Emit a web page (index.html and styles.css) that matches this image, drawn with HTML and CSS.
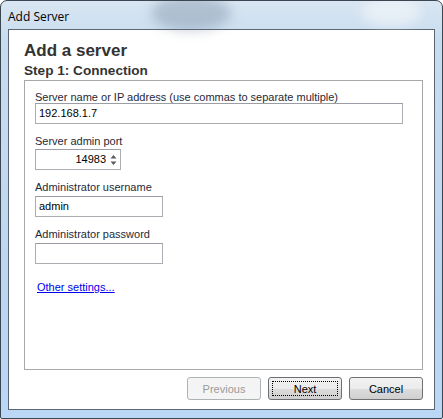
FILE: index.html
```html
<!DOCTYPE html>
<html>
<head>
<meta charset="utf-8">
<link rel="stylesheet" href="styles.css">
</head>
<body>
<div class="window">
  <div class="titlebar">
    <span class="blob blob-a"></span>
    <span class="blob blob-b"></span>
    <span class="title">Add Server</span>
  </div>
  <div class="client">
    <h1 class="heading">Add a server</h1>
    <h2 class="subheading">Step 1: Connection</h2>
    <div class="panel">
      <div class="field">
        <label class="label label-tight">Server name or IP address (use commas to separate multiple)</label>
        <div class="input input-wide">192.168.1.7</div>
      </div>
      <div class="field">
        <label class="label">Server admin port</label>
        <div class="input input-spin">
          <span class="spin-value">14983</span>
          <span class="spin-arrows">
            <svg width="7" height="14" viewBox="0 0 7 14"><path d="M3.5 2 L6.5 5.5 L0.5 5.5 Z" fill="#5a5a5a"/><path d="M0.5 8.5 L6.5 8.5 L3.5 12 Z" fill="#5a5a5a"/></svg>
          </span>
        </div>
      </div>
      <div class="field">
        <label class="label label-loose">Administrator username</label>
        <div class="input input-mid">admin</div>
      </div>
      <div class="field">
        <label class="label label-loose">Administrator password</label>
        <div class="input input-mid"></div>
      </div>
      <a class="link" href="#">Other settings...</a>
    </div>
    <div class="buttons">
      <button class="btn btn-disabled">Previous</button>
      <button class="btn btn-default"><span class="focus">Next</span></button>
      <button class="btn">Cancel</button>
    </div>
  </div>
</div>
</body>
</html>
```
FILE: styles.css
```css
html, body {
  margin: 0;
  padding: 0;
  background: #ffffff;
}
.window {
  box-sizing: border-box;
  width: 443px;
  height: 419px;
  border: 1px solid #3a4652;
  border-radius: 7px 7px 2px 2px;
  background: linear-gradient(to bottom, #d9e6f2 0px, #c8dcef 40px, #bcd6f1 300px, #bad7f6 100%);
  display: flex;
  flex-direction: column;
  overflow: hidden;
  position: relative;
}
.titlebar {
  height: 28px;
  position: relative;
  display: flex;
  align-items: center;
  padding-left: 7px;
}
.blob {
  position: absolute;
  border-radius: 50%;
  filter: blur(6px);
}
.blob-a {
  left: 150px;
  top: -6px;
  width: 80px;
  height: 36px;
  background: rgba(90, 110, 135, 0.3);
}
.blob-b {
  left: 360px;
  top: -4px;
  width: 60px;
  height: 30px;
  background: rgba(255, 255, 255, 0.45);
}
.title {
  position: relative;
  font-family: "Open Sans", "Liberation Sans", sans-serif;
  font-size: 12px;
  color: #000000;
  margin-top: 2px;
}
.client {
  box-sizing: border-box;
  margin: 0 7px;
  height: 381px;
  border: 1px solid #5c6672;
  background: #ffffff;
  padding: 0 11px 0 15px;
  display: flex;
  flex-direction: column;
}
.heading {
  margin: 11px 0 0 0;
  font-family: "Liberation Sans", Arial, sans-serif;
  font-weight: bold;
  font-size: 17px;
  line-height: 20px;
  color: #333333;
}
.subheading {
  margin: 1px 0 0 0;
  font-family: "Liberation Sans", Arial, sans-serif;
  font-weight: bold;
  font-size: 13.6px;
  line-height: 17px;
  color: #333333;
}
.panel {
  box-sizing: border-box;
  margin-top: 1px;
  height: 290px;
  border: 1px solid #a8a8a8;
  padding: 10px 10px 0 10px;
  display: flex;
  flex-direction: column;
}
.field {
  display: flex;
  flex-direction: column;
  margin-bottom: 11px;
}
.label {
  font-family: "Liberation Sans", Arial, sans-serif;
  font-size: 11px;
  line-height: 13px;
  color: #1f2a37;
  margin-bottom: 1px;
}
.label-tight {
  margin-bottom: -1px;
}
.label-loose {
  margin-bottom: 2px;
}
.input {
  box-sizing: border-box;
  height: 21px;
  border: 1px solid #abadb3;
  border-top-color: #9a9da4;
  font-family: "Liberation Sans", Arial, sans-serif;
  font-size: 11px;
  line-height: 19px;
  padding: 0 3px;
  color: #000000;
  background: #ffffff;
}
.input-wide {
  width: 368px;
}
.input-mid {
  width: 128px;
}
.input-spin {
  width: 86px;
  display: flex;
  justify-content: flex-end;
  align-items: center;
  padding: 0 3px 0 3px;
}
.spin-value {
  margin-right: 4px;
}
.spin-arrows {
  display: flex;
  align-items: center;
}
.link {
  margin-top: 6px;
  margin-left: 2px;
  font-family: "Liberation Sans", Arial, sans-serif;
  font-size: 11px;
  line-height: 13px;
  color: #0000ee;
  text-decoration: underline;
  align-self: flex-start;
}
.buttons {
  display: flex;
  justify-content: flex-end;
  gap: 7px;
  margin-top: 7px;
}
.btn {
  box-sizing: border-box;
  width: 74px;
  height: 23px;
  border: 1px solid #707070;
  border-radius: 3px;
  background: linear-gradient(to bottom, #f2f2f2 0%, #ebebeb 50%, #dddddd 51%, #cfcfcf 100%);
  font-family: "Liberation Sans", Arial, sans-serif;
  font-size: 11px;
  color: #000000;
  padding: 0;
  display: flex;
  align-items: center;
  justify-content: center;
}
.btn-disabled {
  border-color: #adb2b5;
  background: #f4f4f4;
  color: #9a9a9a;
}
.btn-default {
  border-color: #6b6f74;
  padding: 3px;
}
.focus {
  box-sizing: border-box;
  width: 100%;
  height: 100%;
  border: 1px dotted #000000;
  display: flex;
  align-items: center;
  justify-content: center;
}
```
